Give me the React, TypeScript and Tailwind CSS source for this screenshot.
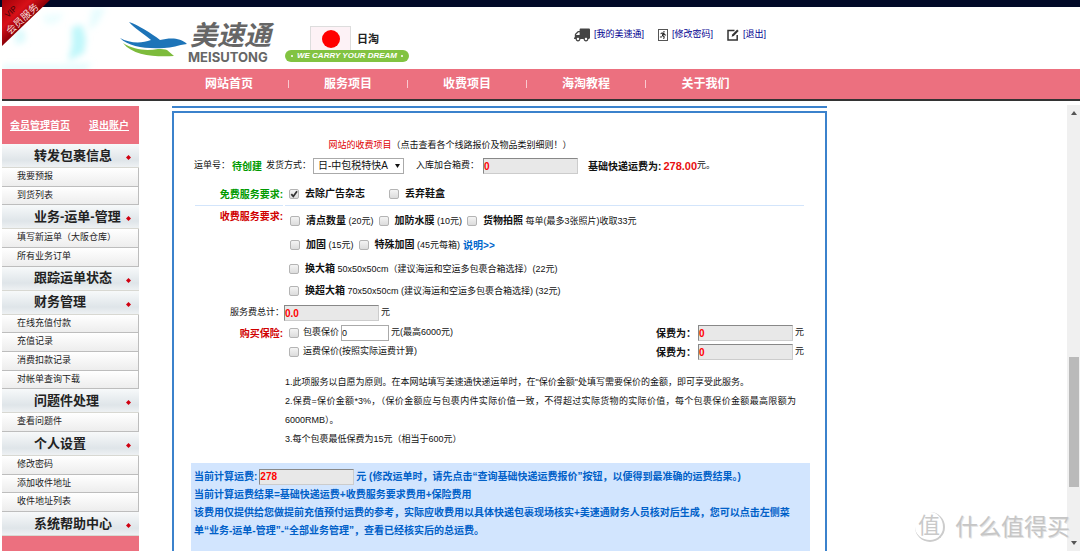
import React from "react";
import { FaTruck, FaRunning } from "react-icons/fa";
import { FiEdit } from "react-icons/fi";

const topLinks = [
  { label: "[我的美速通]", icon: <FaTruck className="size-4 -scale-x-100 text-[#444]" /> },
  {
    label: "[修改密码]",
    icon: (
      <span className="flex h-3 w-2.5 items-center justify-center border border-[#555]">
        <FaRunning className="size-2 text-[#222]" />
      </span>
    ),
  },
  {
    label: "[退出]",
    icon: (
      <svg className="size-3" viewBox="0 0 12 12" aria-hidden="true">
        <path d="M7.5 1.5H1V11H10.2V6" fill="none" stroke="#333" strokeWidth="1.5" />
        <path d="M4.6 7.8L5.2 5.6L10.2 0.6L11.7 2.1L6.8 7.1Z" fill="#333" />
      </svg>
    ),
  },
];

const navItems = ["网站首页", "服务项目", "收费项目", "海淘教程", "关于我们"];

const sideGroups = [
  { title: "转发包裹信息", items: ["我要预报", "到货列表"] },
  { title: "业务-运单-管理", items: ["填写新运单（大阪仓库）", "所有业务订单"] },
  { title: "跟踪运单状态", items: [] },
  { title: "财务管理", items: ["在线充值付款", "充值记录", "消费扣款记录", "对帐单查询下载"] },
  { title: "问题件处理", items: ["查看问题件"] },
  { title: "个人设置", items: ["修改密码", "添加收件地址", "收件地址列表"] },
  { title: "系统帮助中心", items: [] },
];

function Ribbon() {
  return (
    <svg className="absolute left-0.5 top-0 h-12 w-12" viewBox="0 0 48 48" aria-hidden="true">
      <defs>
        <linearGradient id="ribbon" x1="0" y1="0" x2="1" y2="1">
          <stop offset="0" stopColor="#a00008" />
          <stop offset="0.3" stopColor="#d81018" />
          <stop offset="0.5" stopColor="#8c0008" />
        </linearGradient>
      </defs>
      <path d="M0 0H48L0 46Z" fill="url(#ribbon)" />
      <text x="6" y="18" transform="rotate(-43 6 18)" fontSize="8" fill="#3a0508">VIP</text>
      <text x="8" y="35" transform="rotate(-43 8 35)" fontSize="10" fill="#f6dcdc">会员服务</text>
    </svg>
  );
}

function HeaderSplash() {
  return (
    <svg className="absolute left-0.5 top-0 h-full w-32" viewBox="0 0 128 62" preserveAspectRatio="none" aria-hidden="true">
      <defs>
        <filter id="soft" x="-30%" y="-30%" width="160%" height="160%">
          <feGaussianBlur stdDeviation="3" />
        </filter>
      </defs>
      <g filter="url(#soft)" fill="#b9f6fa">
        <path d="M90 2L104 0L96 16L86 24Z" opacity="0.35" />
        <path d="M70 20L80 18L84 32L82 46L66 54L70 38Z" opacity="0.9" />
        <path d="M12 24L22 22L24 34L14 38Z" opacity="0.5" />
        <path d="M40 8L62 6L56 16L44 18Z" opacity="0.25" />
        <path d="M0 58L60 58L90 56L84 64L0 64Z" opacity="0.4" />
      </g>
    </svg>
  );
}

function Bird() {
  return (
    <svg className="h-9 w-[68px]" viewBox="0 0 68 36" aria-hidden="true">
      <path d="M9 0C18 3 31 11 40 18C49 16 60 15 67 22C58 23 52 26 44 26C26 27 9 25 0 16C9 21 21 22 31 18C24 12 14 6 9 0Z" fill="#1d74b8" />
      <path d="M3 21C14 28 26 29 38 27C42 27 45 27 47 28L54 34C36 35 13 34 3 21Z" fill="#7dbb3c" />
    </svg>
  );
}

function Check({ id, checked = false }: { id: string; checked?: boolean }) {
  return (
    <span className="relative mx-1 flex size-2.5 shrink-0">
      <input
        id={id}
        type="checkbox"
        defaultChecked={checked}
        className="peer size-2.5 appearance-none rounded-xs border border-[#b4b4b4] bg-linear-to-b from-[#f4f4f4] to-[#dcdcdc]"
      />
      <svg className="pointer-events-none absolute inset-0 hidden size-2.5 peer-checked:block" viewBox="0 0 10 10" aria-hidden="true">
        <path d="M2.3 5.2L4.3 7.4L8 2.2" fill="none" stroke="#333" strokeWidth="1.8" />
      </svg>
    </span>
  );
}

function Option({ id, name, note, checked }: { id: string; name: string; note?: string; checked?: boolean }) {
  return (
    <span className="flex items-center">
      <Check id={id} checked={checked} />
      <label htmlFor={id} className="ml-0.5 whitespace-nowrap">
        <b className="text-[10px]">{name}</b>
        {note && <span> {note}</span>}
      </label>
    </span>
  );
}

function Fee({ id, value }: { id: string; value: string }) {
  return (
    <input
      id={id}
      readOnly
      defaultValue={value}
      className="h-4 w-[95px] shrink-0 border border-t-[#888] border-r-[#ccc] border-b-[#ccc] border-l-[#888] bg-[#e8e8e8] text-[10px] font-bold text-[#f00] outline-none"
    />
  );
}

function Row({ label, className, children }: { label?: React.ReactNode; className: string; children: React.ReactNode }) {
  return (
    <div className={"flex items-center " + className}>
      <div className="flex w-[94px] shrink-0 justify-end self-stretch pr-0.5">{label}</div>
      {children}
    </div>
  );
}

function Premium({ id }: { id: string }) {
  return (
    <span className="mr-1.5 ml-auto flex items-center">
      <label htmlFor={id} className="mr-0.5 text-[10px] font-bold">保费为：</label>
      <Fee id={id} value="0" />
      <span className="ml-0.5">元</span>
    </span>
  );
}

function Sidebar() {
  return (
    <aside className="ml-0.5 w-[137px] shrink-0 bg-[#ec707f]">
      <div className="flex h-[38px] items-center justify-between pr-2.5 pl-2 text-[10px] font-bold text-white underline">
        <a href="#home">会员管理首页</a>
        <a href="#logout">退出账户</a>
      </div>
      <ul className="flex h-[392px] flex-col bg-white">
        {sideGroups.map((g) => (
          <React.Fragment key={g.title}>
            <li className="flex h-6 shrink-0 items-center justify-between border-b border-[#d8d8d2] bg-linear-to-b from-[#f7f9fa] via-[#dfe5e9] via-70% to-[#eef1f3] pr-2 pl-8">
              <a href="#group" className="text-[13px] font-bold whitespace-nowrap text-[#222]">{g.title}</a>
              <svg className="mt-1 size-[5px] shrink-0" viewBox="0 0 5 5" aria-hidden="true">
                <path d="M2.5 0L5 2.5L2.5 5L0 2.5Z" fill="#d00010" />
              </svg>
            </li>
            {g.items.map((t) => (
              <li key={t} className="flex min-h-0 flex-1 items-center border-r border-b border-[#bdbdbd] bg-linear-to-b from-white to-[#ededed] pl-[15px]">
                <a href="#item" className="text-[9px] whitespace-nowrap text-[#222]">{t}</a>
              </li>
            ))}
          </React.Fragment>
        ))}
      </ul>
    </aside>
  );
}

function OrderForm() {
  return (
    <form className="grow border-2 border-[#3b82cc] pt-6 pl-[17px] pr-[15px] text-[9px] text-[#111]">
      <p className="flex h-[18px] items-center justify-center pr-[101px]">
        <a href="#fees" className="text-[#e00000]">网站的收费项目</a>（点击查看各个线路报价及物品类别细则！）
      </p>
      <div className="flex h-[22px] items-center whitespace-nowrap pl-[3px]">
        运单号：<b className="mr-1 ml-0.5 text-[10px] text-[#009a00]">待创建</b>
        <label htmlFor="ship">发货方式：</label>
        <span className="relative ml-0.5 flex">
          <select id="ship" className="h-4 w-[91px] appearance-none border border-[#aaa] bg-white px-1 text-[10px] leading-3.5">
            <option>日-中包税特快A</option>
          </select>
          <svg className="pointer-events-none absolute top-1.5 right-1 h-1 w-[5px]" viewBox="0 0 5 4" aria-hidden="true">
            <path d="M0 0H5L2.5 4Z" fill="#111" />
          </svg>
        </span>
        <label htmlFor="box" className="ml-3">入库加合箱费：</label>
        <span className="ml-1 flex"><Fee id="box" value="0" /></span>
        <b className="ml-2.5 text-[10px]">基础快递运费为:</b>
        <b className="ml-0.5 text-[11px] text-[#e81010]">278.00</b>元。
      </div>

      <Row className="mt-1.5 h-[22px]" label={<b className="self-center text-[10px] text-[#009a00]">免费服务要求:</b>}>
        <Option id="ads" name="去除广告杂志" checked />
        <span className="ml-5"><Option id="shoe" name="丢弃鞋盒" /></span>
      </Row>
      <div className="mr-1.5 ml-1 flex h-px gap-0.5">
        <div className="w-[88px] bg-[#d3e5fb]" />
        <div className="grow bg-[#d3e5fb]" />
      </div>
      <Row className="mt-1 h-[22px] gap-px" label={<b className="text-[10px] leading-3.5 text-[#d00000]">收费服务要求:</b>}>
        <Option id="count" name="清点数量" note="(20元)" />
        <Option id="film" name="加防水膜" note="(10元)" />
        <Option id="photo" name="货物拍照" note="每单(最多3张照片)收取33元" />
      </Row>
      <Row className="h-[26px] gap-px">
        <Option id="firm" name="加固" note="(15元)" />
        <Option id="firm2" name="特殊加固" note="(45元每箱)" />
        <a href="#explain" className="ml-0.5 text-[10px] font-bold text-[#0066cc]">说明&gt;&gt;</a>
      </Row>
      <Row className="h-[22px]">
        <Option id="big" name="换大箱" note="50x50x50cm（建议海运和空运多包裹合箱选择）(22元)" />
      </Row>
      <Row className="h-[22px]">
        <Option id="huge" name="换超大箱" note="70x50x50cm (建议海运和空运多包裹合箱选择) (32元)" />
      </Row>
      <div className="flex h-[22px] items-center">
        <label htmlFor="total" className="w-[93px] text-right">服务费总计：</label>
        <Fee id="total" value="0.0" />
        <span className="ml-0.5">元</span>
      </div>
      <Row className="h-[18px]" label={<b className="self-center text-[10px] text-[#d00000]">购买保险:</b>}>
        <Check id="ins" />
        <label htmlFor="ins">包裹保价</label>
        <input aria-label="包裹保价金额" defaultValue="0" className="mx-0.5 h-4 w-12 border border-[#aaa] bg-white text-[9px]" />
        元(最高6000元)
        <Premium id="p1" />
      </Row>
      <Row className="h-5">
        <Check id="ins2" />
        <label htmlFor="ins2">运费保价(按照实际运费计算)</label>
        <Premium id="p2" />
      </Row>

      <div className="mt-[11px] mr-3.5 ml-[94px] text-justify leading-[19px]">
        <p>1.此项服务以自愿为原则。在本网站填写美速通快递运单时，在"保价金额"处填写需要保价的金额，即可享受此服务。</p>
        <p>2.保费=保价金额*3%，（保价金额应与包裹内件实际价值一致，不得超过实际货物的实际价值，每个包裹保价金额最高限额为6000RMB）。</p>
        <p>3.每个包裹最低保费为15元（相当于600元）</p>
      </div>

      <div className="mt-3.5 bg-[#d2e5fe] pt-[5px] pr-[17px] pb-8 pl-[3px] text-[10px] leading-[18px] font-bold text-[#0060c8]">
        <div className="flex h-[18px] items-center whitespace-nowrap">
          <label htmlFor="sum" className="mr-0.5">当前计算运费:</label>
          <Fee id="sum" value="278" />
          <span className="ml-0.5">元 (修改运单时，请先点击“查询基础快递运费报价”按钮，以便得到最准确的运费结果。)</span>
        </div>
        <p>当前计算运费结果=基础快递运费+收费服务要求费用+保险费用</p>
        <p>该费用仅提供给您做提前充值预付运费的参考，实际应收费用以具体快递包裹现场核实+美速通财务人员核对后生成，您可以点击左侧菜单“业务-运单-管理”-“全部业务管理”，查看已经核实后的总运费。</p>
      </div>
    </form>
  );
}

function ScrollBar() {
  return (
    <div className="ml-auto flex w-[13px] shrink-0 flex-col items-center bg-[#f0f0f0] py-1.5" aria-hidden="true">
      <svg className="h-1 w-1.5" viewBox="0 0 6 4"><path d="M0 4H6L3 0Z" fill="#555" /></svg>
      <div className="flex w-full grow flex-col items-center">
        <div className="grow-[244]" />
        <div className="w-2.5 grow-[131] bg-[#bababa]" />
        <div className="grow-[54]" />
      </div>
      <svg className="h-1 w-1.5" viewBox="0 0 6 4"><path d="M0 0H6L3 4Z" fill="#555" /></svg>
    </div>
  );
}

export default function App() {
  return (
    <div className="relative flex h-screen flex-col overflow-hidden bg-white font-['Liberation_Sans','Noto_Sans_CJK_SC',sans-serif] text-[9px]">
      <div className="h-[7px] shrink-0 bg-[#020a28]" />
      <header className="relative flex h-[62px] shrink-0 pl-[120px]">
        <HeaderSplash />
        <div className="relative flex pt-[15px]">
          <Bird />
          <div className="w-[97px] text-[#666]">
            <div className="pl-0.5 text-[27px] leading-[29px] font-bold italic">美速通</div>
            <div className="font-[Inter] text-[13px] leading-[13px] font-bold">MEISUTONG</div>
          </div>
        </div>
        <div className="w-[124px] pt-[19px]">
          <div className="flex items-center gap-1.5 pl-[25px]">
            <span className="flex h-6 w-[41px] items-center justify-center border border-b-0 border-[#ddd] bg-[#fdf2f6]">
              <span className="size-[18px] rounded-full bg-[#f00]" />
            </span>
            <span className="pt-0.5 text-[11px] font-bold text-[#222]">日淘</span>
          </div>
          <div className="flex h-3 items-center justify-center gap-1 rounded-full bg-[#82c341] text-[8px] leading-3 font-bold whitespace-nowrap text-white italic">
            <span className="size-0.5 rounded-full bg-white" />
            WE CARRY YOUR DREAM
            <span className="size-0.5 rounded-full bg-white" />
          </div>
        </div>
        <nav className="ml-[165px] flex h-14 items-center gap-3.5">
          {topLinks.map((l) => (
            <a key={l.label} href="#account" className="flex items-center gap-1 whitespace-nowrap text-[#000090]">
              {l.icon}
              {l.label}
            </a>
          ))}
        </nav>
      </header>
      <nav className="ml-0.5 flex h-8 shrink-0 items-center border-b-2 border-[#333] bg-[#ec707f] pl-[168px]">
        {navItems.map((n) => (
          <a key={n} href="#nav" className="w-[119px] border-r border-[#f9c9cf] text-center text-[12px] leading-2 font-bold text-white last:border-r-0">
            {n}
          </a>
        ))}
      </nav>
      <div className="flex min-h-0 grow pt-1">
        <div className="flex min-w-0 grow pt-px">
          <Sidebar />
          <main className="ml-[33px] flex w-[655px] flex-col">
            <div className="mb-[3px] h-0.5 shrink-0 bg-[#3b82cc]" />
            <OrderForm />
          </main>
        </div>
        <ScrollBar />
      </div>
      <Ribbon />
      <div className="absolute right-2.5 bottom-2 flex items-center gap-2.5 text-[#c9c9c9]">
        <span className="flex size-[30px] items-center justify-center rounded-full border-r-2 border-b-2 border-[#ccc] text-[22px] leading-none">值</span>
        <span className="text-[23px] leading-8 text-[#c6c6c6] [text-shadow:1px_1px_0_#e4e4e4]">什么值得买</span>
      </div>
    </div>
  );
}
